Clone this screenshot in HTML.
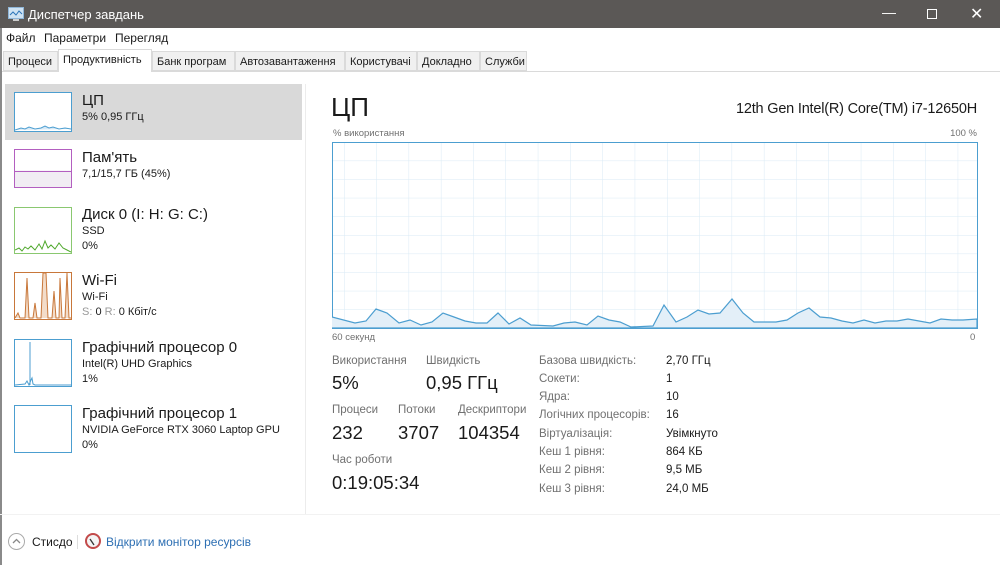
<!DOCTYPE html>
<html><head><meta charset="utf-8"><style>
*{margin:0;padding:0;box-sizing:border-box}
body{width:1000px;height:565px;overflow:hidden;background:#fff;font-family:"Liberation Sans","DejaVu Sans",sans-serif;color:#1a1a1a;position:relative}
.a{position:absolute;white-space:nowrap}
.tb{left:0;top:0;width:1000px;height:28px;background:#5b5856;color:#fff;font-size:13px}
.tab{position:absolute;top:51px;height:20px;background:#f0f0f0;border:1px solid #dadada;font-size:11px;padding:4px 0 0 4px;overflow:hidden}
.th{position:absolute;left:14px;width:58px;border:1px solid}
.nm{font-size:15px;left:82px}
.sb{font-size:11px;left:82px}
.lbl{font-size:11.5px;color:#707070}
.big{font-size:18.5px;color:#1a1a1a}
.k{font-size:11.5px;color:#707070;left:539px}
.v{font-size:11.5px;left:666px}
</style></head><body>
<div class="a tb">
 <svg class="a" style="left:8px;top:7px" width="16" height="14"><rect x="0.5" y="0.5" width="15" height="11" fill="#cfe3f3" stroke="#8fb6d8"/><polyline points="2,8 5,5 8,8 11,4 14,7" fill="none" stroke="#2b74b8"/><rect x="5" y="12" width="6" height="2" fill="#ccc"/></svg>
 <span class="a" style="left:28px;top:7px">Диспетчер завдань</span>
 <span class="a" style="left:882px;top:4px;font-size:14px">—</span>
 <div class="a" style="left:927px;top:9px;width:10px;height:10px;border:1px solid #fff"></div>
 <span class="a" style="left:970px;top:4px;font-size:16px">✕</span>
</div>
<div class="a" style="left:0;top:28px;width:2px;height:537px;background:#8a8a8a"></div>
<div class="a" style="left:6px;top:31px;font-size:12px">Файл</div>
<div class="a" style="left:44px;top:31px;font-size:12px">Параметри</div>
<div class="a" style="left:115px;top:31px;font-size:12px">Перегляд</div>
<div class="a" style="left:2px;top:71px;width:998px;height:1px;background:#dadada"></div>
<div class="tab" style="left:3px;width:55px">Процеси</div>
<div class="tab" style="left:58px;width:94px;top:49px;height:23px;background:#fff;border-bottom:none;padding-top:4px">Продуктивність</div>
<div class="tab" style="left:152px;width:83px">Банк програм</div>
<div class="tab" style="left:235px;width:110px">Автозавантаження</div>
<div class="tab" style="left:345px;width:72px">Користувачі</div>
<div class="tab" style="left:417px;width:63px">Докладно</div>
<div class="tab" style="left:480px;width:47px">Служби</div>

<div class="a" style="left:5px;top:84px;width:297px;height:56px;background:#d9d9d9"></div>
<div class="a" style="left:305px;top:84px;width:1px;height:430px;background:#ececec"></div>

<div class="th" style="top:92px;height:40px;border-color:#4c9ed0;background:#fff"><svg width="56" height="38"><polyline points="0,37 6,35 10,36 14,34 20,36 26,35 30,33 34,35 38,34 44,36 50,35 56,36" fill="#d7e9f6" stroke="#4c9ed0"/></svg></div>
<div class="a nm" style="top:92px">ЦП</div><div class="a sb" style="top:111px">5% 0,95 ГГц</div>

<div class="th" style="top:149px;height:39px;border-color:#b35fc0;background:linear-gradient(#fff 0,#fff 56%,#f1edf3 56%)"><div style="margin-top:21px;height:1px;background:#b35fc0"></div></div>
<div class="a nm" style="top:149px">Пам'ять</div><div class="a sb" style="top:168px">7,1/15,7 ГБ (45%)</div>

<div class="th" style="top:207px;height:47px;border-color:#8ac870"><svg width="56" height="45"><polyline points="0,42 4,40 7,43 10,39 13,41 16,38 20,42 24,36 27,41 30,33 33,40 36,37 40,41 44,35 48,40 52,42 56,44" fill="none" stroke="#4fa82c"/></svg></div>
<div class="a nm" style="top:206px">Диск 0 (I: H: G: C:)</div><div class="a sb" style="top:225px">SSD</div><div class="a sb" style="top:240px">0%</div>

<div class="th" style="top:272px;height:48px;border-color:#c8773a"><svg width="56" height="46"><polyline points="0,45 3,40 5,45 10,45 12,5 14,45 18,45 20,30 22,45 26,45 28,0 31,0 33,45 37,45 39,18 41,45 44,45 45,5 47,45 50,45 52,0 54,45 56,45" fill="#f3dcc9" stroke="#c8773a"/></svg></div>
<div class="a nm" style="top:272px">Wi-Fi</div><div class="a sb" style="top:291px">Wi-Fi</div><div class="a sb" style="top:306px"><span style="color:#999">S:</span> 0 <span style="color:#999">R:</span> 0 Кбіт/с</div>

<div class="th" style="top:339px;height:48px;border-color:#4c9ed0"><svg width="56" height="46"><polyline points="0,45 10,44 12,41 14,45 16,40 17,38 18,44 20,45 56,45" fill="none" stroke="#4c9ed0"/><line x1="15" y1="2" x2="15" y2="45" stroke="#4c9ed0"/></svg></div>
<div class="a nm" style="top:339px">Графічний процесор 0</div><div class="a sb" style="top:358px">Intel(R) UHD Graphics</div><div class="a sb" style="top:373px">1%</div>

<div class="th" style="top:405px;height:48px;border-color:#4c9ed0"></div>
<div class="a nm" style="top:405px">Графічний процесор 1</div><div class="a sb" style="top:424px">NVIDIA GeForce RTX 3060 Laptop GPU</div><div class="a sb" style="top:439px">0%</div>

<div class="a" style="left:0;top:514px;width:1000px;height:1px;background:#f2f2f2"></div>
<div class="a" style="left:8px;top:533px;width:17px;height:17px;border:1px solid #aaa;border-radius:50%"><svg width="15" height="15"><polyline points="4,9 7.5,5.5 11,9" fill="none" stroke="#888" stroke-width="1.3"/></svg></div>
<div class="a" style="left:32px;top:535px;font-size:12px">Стисдо</div>
<div class="a" style="left:77px;top:535px;width:1px;height:14px;background:#ddd"></div>
<div class="a" style="left:85px;top:533px;width:16px;height:16px;border:2px solid #c24a4a;border-radius:50%;background:#f4f4f4"><svg width="12" height="12"><line x1="3" y1="3" x2="7" y2="9" stroke="#333" stroke-width="1.3"/></svg></div>
<div class="a" style="left:106px;top:535px;font-size:12px;color:#2d6fb3">Відкрити монітор ресурсів</div>

<div class="a" style="left:331px;top:92px;font-size:26px">ЦП</div>
<div class="a" style="right:23px;top:101px;font-size:14.5px;letter-spacing:-0.2px">12th Gen Intel(R) Core(TM) i7-12650H</div>
<div class="a" style="left:333px;top:128px;font-size:9.5px;color:#707070">% використання</div>
<div class="a" style="right:23px;top:128px;font-size:9.5px;color:#707070">100 %</div>
<svg class="a" style="left:332px;top:142px" width="646" height="187">
 <defs><pattern id="g" x="12" y="0" width="32.3" height="18.6" patternUnits="userSpaceOnUse"><path d="M0 0V18.6M0 0H32.3" fill="none" stroke="#d9eaf5" stroke-width="1"/></pattern></defs>
 <rect x="0.5" y="0.5" width="645" height="186" fill="url(#g)" stroke="#4c9ed0"/>
 <polyline points="0,175 23,181 34,179 44,167 55,171 67,181 78,178 89,183 100,180 111,171 122,175 133,179 144,181 155,181 166,171 177,182 188,176 199,183 221,184 232,181 243,180 255,183 266,174 277,178 288,180 299,185 321,184 332,163 344,180 355,175 366,168 377,172 388,171 400,157 411,171 422,180 444,180 455,178 466,171 477,166 488,175 499,176 510,179 521,181 532,178 543,181 554,179 565,179 576,177 587,179 598,181 609,177 620,178 631,178 645,177 645,186 0,186" fill="#e3eff8" stroke="#4c9ed0" stroke-width="1.2"/>
</svg>
<div class="a" style="left:332px;top:332px;font-size:9.5px;color:#707070">60 секунд</div>
<div class="a" style="left:970px;top:332px;font-size:9.5px;color:#707070">0</div>

<div class="a lbl" style="left:332px;top:355px">Використання</div>
<div class="a lbl" style="left:426px;top:355px">Швидкість</div>
<div class="a big" style="left:332px;top:372px">5%</div>
<div class="a big" style="left:426px;top:372px">0,95 ГГц</div>
<div class="a lbl" style="left:332px;top:404px">Процеси</div>
<div class="a lbl" style="left:398px;top:404px">Потоки</div>
<div class="a lbl" style="left:458px;top:404px">Дескриптори</div>
<div class="a big" style="left:332px;top:422px">232</div>
<div class="a big" style="left:398px;top:422px">3707</div>
<div class="a big" style="left:458px;top:422px">104354</div>
<div class="a lbl" style="left:332px;top:454px">Час роботи</div>
<div class="a big" style="left:332px;top:472px">0:19:05:34</div>

<div class="a k" style="top:355px">Базова швидкість:</div><div class="a v" style="top:355px">2,70 ГГц</div>
<div class="a k" style="top:373px">Сокети:</div><div class="a v" style="top:373px">1</div>
<div class="a k" style="top:391px">Ядра:</div><div class="a v" style="top:391px">10</div>
<div class="a k" style="top:409px">Логічних процесорів:</div><div class="a v" style="top:409px">16</div>
<div class="a k" style="top:428px">Віртуалізація:</div><div class="a v" style="top:428px">Увімкнуто</div>
<div class="a k" style="top:446px">Кеш 1 рівня:</div><div class="a v" style="top:446px">864 КБ</div>
<div class="a k" style="top:464px">Кеш 2 рівня:</div><div class="a v" style="top:464px">9,5 МБ</div>
<div class="a k" style="top:483px">Кеш 3 рівня:</div><div class="a v" style="top:483px">24,0 МБ</div>
</body></html>
